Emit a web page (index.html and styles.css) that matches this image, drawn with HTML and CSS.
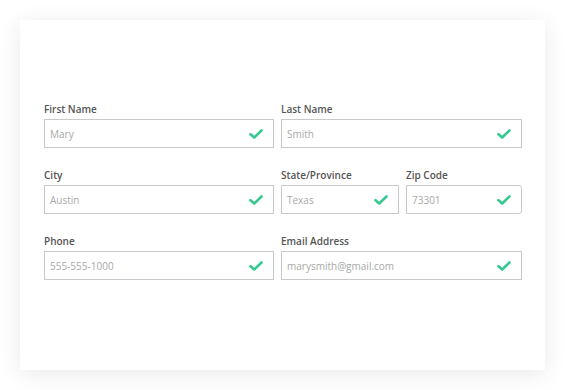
FILE: index.html
```html
<!DOCTYPE html>
<html lang="en">
<head>
    <meta charset="UTF-8">
    <meta name="viewport" content="width=device-width, initial-scale=1.0">
    <title>Contact Form</title>
    <link rel="stylesheet" href="styles.css">
</head>
<body>

<div class="card">
    <form class="form-grid">
        <div class="field">
            <label>First Name</label>
            <div class="input-box"><span>Mary</span><svg class="check" viewBox="0 0 14 10"><path d="M1.5 5.2 L5.2 8.5 L12.5 1.5"/></svg></div>
        </div>
        <div class="field wide">
            <label>Last Name</label>
            <div class="input-box"><span>Smith</span><svg class="check" viewBox="0 0 14 10"><path d="M1.5 5.2 L5.2 8.5 L12.5 1.5"/></svg></div>
        </div>

        <div class="field">
            <label>City</label>
            <div class="input-box"><span>Austin</span><svg class="check" viewBox="0 0 14 10"><path d="M1.5 5.2 L5.2 8.5 L12.5 1.5"/></svg></div>
        </div>
        <div class="field">
            <label>State/Province</label>
            <div class="input-box"><span>Texas</span><svg class="check" viewBox="0 0 14 10"><path d="M1.5 5.2 L5.2 8.5 L12.5 1.5"/></svg></div>
        </div>
        <div class="field">
            <label>Zip Code</label>
            <div class="input-box zip"><span>73301</span><svg class="check" viewBox="0 0 14 10"><path d="M1.5 5.2 L5.2 8.5 L12.5 1.5"/></svg></div>
        </div>

        <div class="field">
            <label>Phone</label>
            <div class="input-box"><span>555-555-1000</span><svg class="check" viewBox="0 0 14 10"><path d="M1.5 5.2 L5.2 8.5 L12.5 1.5"/></svg></div>
        </div>
        <div class="field wide">
            <label>Email Address</label>
            <div class="input-box"><span>marysmith@gmail.com</span><svg class="check" viewBox="0 0 14 10"><path d="M1.5 5.2 L5.2 8.5 L12.5 1.5"/></svg></div>
        </div>
    </form>
</div>

</body>
</html>
```

FILE: styles.css
```css
body, html {
    margin: 0;
    background: #ffffff;
}
body {
    padding: 20px;
    font-family: "Open Sans", "Liberation Sans", sans-serif;
}
.card {
    width: 525px;
    height: 350px;
    background: #ffffff;
    box-shadow: 0 4px 22px rgba(0, 0, 0, 0.09);
    padding: 82px 23px 0 24px;
    box-sizing: border-box;
}
.form-grid {
    display: grid;
    grid-template-columns: 230px 118px 1fr;
    column-gap: 7px;
    row-gap: 20px;
}
.field {
    display: flex;
    flex-direction: column;
}
.field.wide {
    grid-column: span 2;
}
.field label {
    font-size: 10px;
    font-weight: 600;
    color: #555555;
    line-height: 14px;
    margin-bottom: 3px;
}
.input-box {
    display: flex;
    align-items: center;
    justify-content: space-between;
    height: 29px;
    border: 1px solid #c9c9c9;
    padding: 0 10px 0 5px;
    box-sizing: border-box;
    font-size: 10px;
    color: #a8a8a8;
}
.input-box.zip {
    border-radius: 0 3px 3px 0;
}
.check {
    width: 14px;
    height: 10px;
}
.check path {
    fill: none;
    stroke: #35c98f;
    stroke-width: 2.6;
    stroke-linecap: round;
    stroke-linejoin: round;
}
```
